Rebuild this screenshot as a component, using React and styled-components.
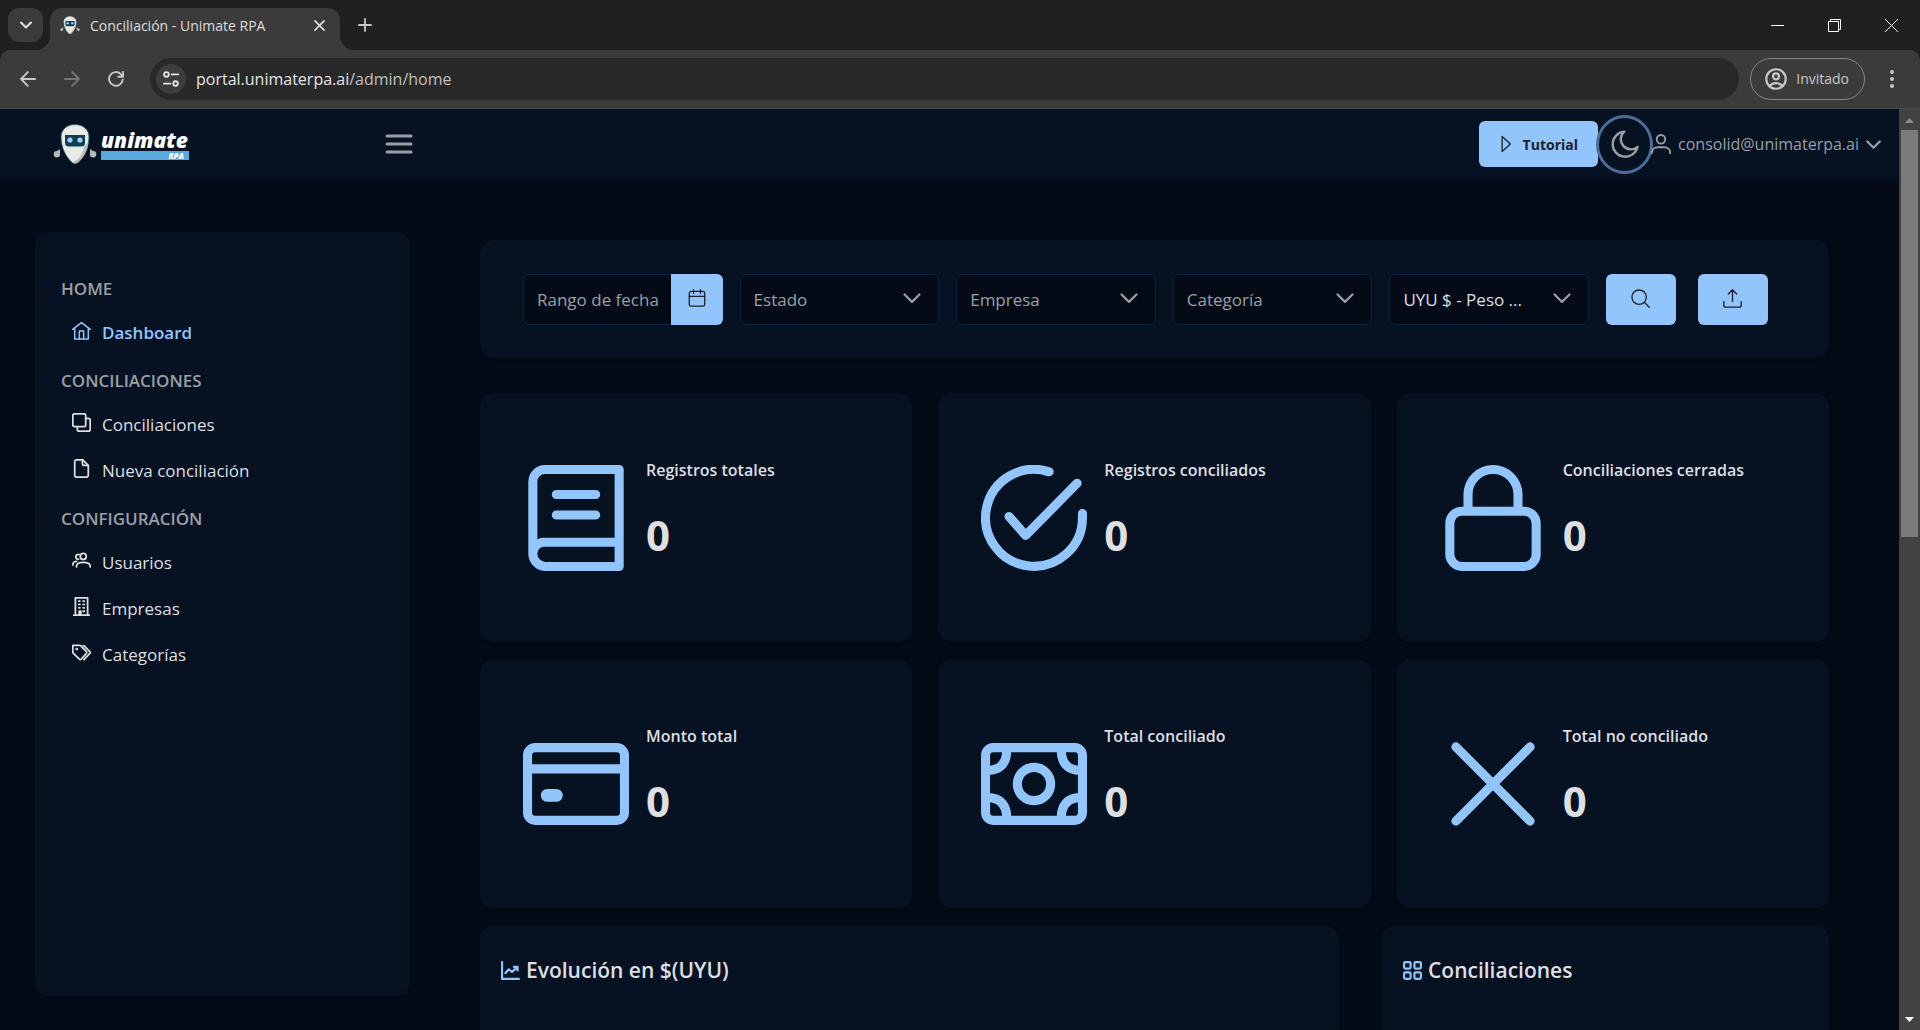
import React from "react";
import styled, { createGlobalStyle } from "styled-components";

const GlobalStyle = createGlobalStyle`
  * {
    box-sizing: border-box;
  }
  html, body, #root {
    height: 100%;
  }
  body {
    margin: 0;
    overflow: hidden;
    background: #040b16;
    color: #dedfe1;
    font-family: "Open Sans", "Noto Sans", sans-serif;
    font-size: 16px;
  }
  button, input, select {
    font: inherit;
    color: inherit;
  }
  button {
    padding: 0;
    border: none;
    background: none;
    cursor: pointer;
  }
`;

// Stroke icons on a 14 x 14 grid
const icons = {
  home: (
    <>
      <path d="M.5 6.200 7 1.200l6.500 5M2 5.300v8h10v-8" />
      <path d="M5.400 13.200V7.400h3.200v5.800" />
    </>
  ),
  clone: (
    <>
      <rect x=".6" y=".6" width="9.500" height="9.500" rx="1.200" />
      <path d="M10.300 3.900h1.900a1.200 1.200 0 0 1 1.200 1.200v7.100a1.200 1.200 0 0 1-1.200 1.200H5.100a1.200 1.200 0 0 1-1.200-1.200v-1.900" />
    </>
  ),
  file: (
    <>
      <path d="M3.200.6h4.700l4.100 4.100v7.300a1.400 1.400 0 0 1-1.400 1.400H3.400A1.400 1.400 0 0 1 2 12V2A1.400 1.400 0 0 1 3.400.6z" />
      <path d="M7.700.8v2.900a1 1 0 0 0 1 1h3" />
    </>
  ),
  users: (
    <>
      <circle cx="8.300" cy="4" r="2.200" />
      <path d="M3.300 11.700v-.500C3.300 9.300 5.300 8.400 8.300 8.400s5.100.9 5.100 2.800v.5" />
      <path d="M5.200 2.600a1.800 1.800 0 1 0-.4 3.500M.6 10.300C.6 8.600 1.500 7.900 3.300 7.700" />
    </>
  ),
  building: (
    <>
      <path d="M2.500 13.300V.6h9v12.700M1.300 13.400h11.400" />
      <path d="M5 3h.8M8.200 3H9M5 5.500h.8M8.200 5.500H9M5 8h.8M8.200 8H9M5.300 13v-2.600h1.200V13M8.200 10.500H9" />
    </>
  ),
  tags: (
    <>
      <path d="M.6 1.800h5.200a1 1 0 0 1 .7.300l4 4a1.100 1.100 0 0 1 0 1.600l-3.600 4.200a1 1 0 0 1-1.500 0L.9 7.500a1 1 0 0 1-.3-.7z" />
      <path d="M8.200 1.900c.5 0 .8.200 1.100.5l3.800 3.900c.4.400.4 1 0 1.400l-4.300 4.500" />
      <circle cx="3.500" cy="4.500" r=".4" />
    </>
  ),
  calendar: (
    <>
      <rect x="1" y="1.900" width="12" height="11.500" rx="1.400" />
      <path d="M1 5.800h12M4.300.5v3M9.700.5v3" />
    </>
  ),
  search: (
    <>
      <circle cx="6" cy="6" r="5.300" />
      <path d="m10 10 3.400 3.400" />
    </>
  ),
  upload: (
    <path d="M7 9.300V.7M3.900 3.700 7 .6l3.100 3.100M.6 9.300v2.700A1.400 1.400 0 0 0 2 13.400h10a1.400 1.400 0 0 0 1.400-1.400V9.300" />
  ),
  play: <path d="M4 1.200v11.600l6.400-5.800z" />,
  moon: (
    <path d="M6.600.8a6.300 6.300 0 1 0 6.700 7.600A5 5 0 0 1 6.600.8z" />
  ),
  user: (
    <>
      <circle cx="7" cy="3.700" r="3" />
      <path d="M.6 13.400v-.500c0-2.300 1.900-3.600 4.200-3.600h4.400c2.300 0 4.200 1.300 4.200 3.600v.5" />
    </>
  ),
  down: <path d="M1.200 4.200 7 10l5.800-5.800" />,
  book: (
    <>
      <path d="M12.700 10.200H2.600A1.600 1.600 0 0 0 1.300 11.700M12.700.6H2.900A1.600 1.600 0 0 0 1.300 2.200v9.500a1.700 1.700 0 0 0 1.600 1.700h9.800z" />
      <path d="M4.400 3.900h5.200M4.400 6.600h5.200" />
    </>
  ),
  check: (
    <>
      <path d="M9 .9A6.400 6.400 0 1 0 13.400 7v-.6" />
      <path d="M3.700 6.800 5.900 9.300l6.800-6.900" />
    </>
  ),
  lock: (
    <>
      <rect x="1.300" y="6.100" width="11.400" height="7.300" rx="1.600" />
      <path d="M3.700 6V3.900a3.300 3.300 0 0 1 6.600 0V6" />
    </>
  ),
  card: (
    <>
      <rect x=".6" y="2.200" width="12.800" height="9.600" rx="1" />
      <path d="M.6 5h12.800" />
      <path strokeWidth="1.700" d="M3.200 8.500h1.200" />
    </>
  ),
  money: (
    <>
      <rect x=".6" y="2.200" width="12.800" height="9.600" rx="1" />
      <circle cx="7" cy="7" r="2.200" />
      <path strokeLinecap="butt" d="M3.400 2.500c0 1.700-.8 2.700-2.500 2.700M10.600 2.500c0 1.700.8 2.700 2.500 2.700M3.400 11.500c0-1.700-.8-2.700-2.500-2.700M10.600 11.500c0-1.700.8-2.700 2.500-2.700" />
    </>
  ),
  times: <path d="m2.100 2.100 9.800 9.800M11.900 2.100l-9.800 9.800" />,
  chart: (
    <>
      <path d="M.8.800v12.400h12.400" />
      <path d="m3.300 8.900 2.500-2.800 2.300 2L12 4.500M9.500 4.300h2.700V7" />
    </>
  ),
  grid: (
    <>
      <rect x=".8" y=".8" width="4.800" height="4.800" rx="1" />
      <rect x="8.400" y=".8" width="4.800" height="4.800" rx="1" />
      <rect x=".8" y="8.400" width="4.800" height="4.800" rx="1" />
      <rect x="8.400" y="8.400" width="4.800" height="4.800" rx="1" />
    </>
  ),
  tune: (
    <>
      <circle cx="3" cy="3" r="2" />
      <circle cx="11" cy="11" r="2" />
      <path d="M7.500 3h5.700M.8 11h5.700" />
    </>
  ),
  guest: (
    <>
      <circle cx="7" cy="7" r="6.200" />
      <circle cx="7" cy="5.300" r="1.900" />
      <path d="M2.800 11.500c1.200-1.300 2.600-1.900 4.200-1.900s3 .6 4.200 1.900" />
    </>
  ),
  back: <path d="M13.200 7H1M6.800 1 1 7l5.800 6" />,
  forward: <path d="M.8 7H13M7.200 1 13 7l-5.800 6" />,
  reload: <path d="M12.900 7.600A6 6 0 1 1 11.200 2.700l1.700 1.900M13.200.8v4.300H8.900" />,
  plus: <path d="M7 1v12M1 7h12" />,
};

const Icon = ({ name, size = 18, weight = 1 }) => (
  <SIcon
    width={size}
    height={size}
    viewBox="0 0 14 14"
    fill="none"
    stroke="currentColor"
    strokeWidth={weight}
    strokeLinecap="round"
    strokeLinejoin="round"
    aria-hidden="true"
  >
    {icons[name]}
  </SIcon>
);

const Robot = ({ size }) => (
  <SIcon width={size} height={size} viewBox="0 0 44 40" aria-hidden="true">
    <path
      d="M22 .5c8.500 0 14 5.500 14 12.500 0 11-5 20-11 25.500q-3 2-6 0C13 33 8 24 8 13 8 6 13.500.5 22 .5z"
      fill="#e9e9e6"
      stroke="#1d5566"
      strokeWidth=".8"
    />
    <path
      d="M35.500 18c-1 9-4.500 15.500-10.500 20.500q-3 2-6 0c7-2.500 11-8 12-16z"
      fill="#b9bbbd"
    />
    <path d="M12 11h20v8q0 3.500-4 3.500H16q-4 0-4-3.500z" fill="#0b4157" />
    <circle cx="17" cy="16" r="2.600" fill="#a9cdf5" />
    <circle cx="27" cy="16" r="2.600" fill="#a9cdf5" />
    <path d="M7 25 4 27a3.200 3.200 0 1 0 3 2.500zM37 25l3 2a3.200 3.200 0 1 1-3 2.500z" fill="#b4b8bc" />
  </SIcon>
);

const menu = [
  {
    title: "HOME",
    items: [{ icon: "home", label: "Dashboard", active: true }],
  },
  {
    title: "CONCILIACIONES",
    items: [
      { icon: "clone", label: "Conciliaciones" },
      { icon: "file", label: "Nueva conciliación" },
    ],
  },
  {
    title: "CONFIGURACIÓN",
    items: [
      { icon: "users", label: "Usuarios" },
      { icon: "building", label: "Empresas" },
      { icon: "tags", label: "Categorías" },
    ],
  },
];

const filters = [
  { name: "Estado" },
  { name: "Empresa" },
  { name: "Categoría" },
  { name: "Moneda", value: "UYU $ - Peso ..." },
];

const stats = [
  { icon: "book", label: "Registros totales", value: 0 },
  { icon: "check", label: "Registros conciliados", value: 0 },
  { icon: "lock", label: "Conciliaciones cerradas", value: 0 },
  { icon: "card", label: "Monto total", value: 0 },
  { icon: "money", label: "Total conciliado", value: 0 },
  { icon: "times", label: "Total no conciliado", value: 0 },
];

const Browser = () => (
  <SBrowser>
    <STabStrip>
      <STabSearch aria-label="Buscar pestañas">
        <Icon name="down" size={12} weight={2.4} />
      </STabSearch>
      <STab>
        <Robot size={20} />
        <STabTitle>Conciliación - Unimate RPA</STabTitle>
        <STabClose aria-label="Cerrar pestaña">
          <Icon name="times" size={13} weight={1.8} />
        </STabClose>
      </STab>
      <SNewTab aria-label="Nueva pestaña">
        <Icon name="plus" size={14} weight={1.8} />
      </SNewTab>
      <SWindowButtons>
        <SWindowButton aria-label="Minimizar">
          <svg width="13" height="13" stroke="#fff" fill="none">
            <path d="M0 6.500h13" />
          </svg>
        </SWindowButton>
        <SWindowButton aria-label="Restaurar">
          <svg width="13" height="13" stroke="#fff" fill="none">
            <path d="M.5 2.500h10v10H.5zM2.500 2.500v-2h10v10h-2" />
          </svg>
        </SWindowButton>
        <SWindowButton aria-label="Cerrar">
          <svg width="13" height="13" stroke="#fff" fill="none">
            <path d="m0 0 13 13M13 0 0 13" />
          </svg>
        </SWindowButton>
      </SWindowButtons>
    </STabStrip>
    <SToolbar>
      <SNavButton aria-label="Atrás">
        <Icon name="back" size={16} weight={1.7} />
      </SNavButton>
      <SNavButton aria-label="Adelante" disabled>
        <Icon name="forward" size={16} weight={1.7} />
      </SNavButton>
      <SNavButton aria-label="Recargar">
        <Icon name="reload" size={16} weight={1.7} />
      </SNavButton>
      <SAddress>
        <SSiteInfo aria-label="Información del sitio">
          <Icon name="tune" size={16} weight={1.6} />
        </SSiteInfo>
        <span>
          portal.unimaterpa.ai<SPath>/admin/home</SPath>
        </span>
      </SAddress>
      <SGuest>
        <Icon name="guest" size={22} weight={1.4} />
        Invitado
      </SGuest>
      <SDots aria-label="Menú">
        <svg width="4" height="18" fill="#c7c7c7">
          <circle cx="2" cy="2" r="2" />
          <circle cx="2" cy="9" r="2" />
          <circle cx="2" cy="16" r="2" />
        </svg>
      </SDots>
    </SToolbar>
  </SBrowser>
);

const Topbar = () => (
  <STopbar>
    <SLogo href="#">
      <Robot size={44} />
      <SLogoText>
        <SLogoName>unimate</SLogoName>
        <SLogoTag>RPA</SLogoTag>
      </SLogoText>
    </SLogo>
    <SMenuButton aria-label="Abrir menú">
      <svg width="28" height="20" stroke="currentColor" strokeWidth="3" strokeLinecap="round">
        <path d="M2 2h24M2 10h24M2 18h24" />
      </svg>
    </SMenuButton>
    <STutorial>
      <Icon name="play" weight={1} />
      Tutorial
    </STutorial>
    <STheme aria-label="Cambiar tema">
      <Icon name="moon" size={28} weight={1.2} />
    </STheme>
    <SAccount>
      <Icon name="user" size={20} weight={1.3} />
      consolid@unimaterpa.ai
      <Icon name="down" size={15} weight={2.2} />
    </SAccount>
  </STopbar>
);

const Sidebar = () => (
  <SSidebar>
    {menu.map((group) => (
      <SGroup key={group.title}>
        <SGroupTitle>{group.title}</SGroupTitle>
        <SList>
          {group.items.map((item) => (
            <li key={item.label}>
              <SLink href="#" $active={item.active}>
                <Icon name={item.icon} size={19} weight={item.active ? 1.1 : 1.3} />
                {item.label}
              </SLink>
            </li>
          ))}
        </SList>
      </SGroup>
    ))}
  </SSidebar>
);

const Filters = () => (
  <SFilters>
    <SDateField>
      <SDateInput aria-label="Rango de fechas" placeholder="Rango de fechas" />
      <SDateButton aria-label="Abrir calendario">
        <Icon name="calendar" size={18} />
      </SDateButton>
    </SDateField>
    {filters.map((filter) => (
      <SSelectWrap key={filter.name}>
        <SSelect aria-label={filter.name} $filled={Boolean(filter.value)}>
          <option>{filter.value || filter.name}</option>
        </SSelect>
        <SArrow>
          <Icon name="down" size={18} weight={1.7} />
        </SArrow>
      </SSelectWrap>
    ))}
    <SActions>
      <SAction aria-label="Buscar">
        <Icon name="search" size={19} />
      </SAction>
      <SAction aria-label="Exportar">
        <Icon name="upload" size={19} />
      </SAction>
    </SActions>
  </SFilters>
);

const App = () => (
  <SWindow>
    <GlobalStyle />
    <Browser />
    <SViewport>
      <SPage>
        <Topbar />
        <SBody>
          <Sidebar />
          <SMain>
            <Filters />
            <SStats>
              {stats.map((stat) => (
                <SStat key={stat.label}>
                  <Icon name={stat.icon} size={106} weight={1.200} />
                  <SStatText>
                    <SStatLabel>{stat.label}</SStatLabel>
                    <SStatValue>{stat.value}</SStatValue>
                  </SStatText>
                </SStat>
              ))}
            </SStats>
            <SPanels>
              <SPanel>
                <SPanelTitle>
                  <Icon name="chart" size={19} weight={1.6} />
                  Evolución en $(UYU)
                </SPanelTitle>
              </SPanel>
              <SPanel>
                <SPanelTitle>
                  <Icon name="grid" size={19} weight={1.6} />
                  Conciliaciones
                </SPanelTitle>
              </SPanel>
            </SPanels>
          </SMain>
        </SBody>
      </SPage>
      <SScrollbar>
        <svg width="9" height="5" fill="#8b8b8b">
          <path d="M0 5 4.500 0 9 5z" />
        </svg>
        <SThumb />
        <svg width="9" height="5" fill="#fff">
          <path d="M0 0h9L4.500 5z" />
        </svg>
      </SScrollbar>
    </SViewport>
  </SWindow>
);

export default App;

const SIcon = styled.svg`
  display: block;
  flex: none;
`;

const SWindow = styled.div`
  display: flex;
  flex-direction: column;
  height: 100vh;
`;

const SBrowser = styled.header`
  background: #1f2020;
`;

const STabStrip = styled.div`
  display: flex;
  height: 50px;
  padding: 8px 0 0 8px;
`;

const STabSearch = styled.button`
  display: grid;
  place-items: center;
  width: 35px;
  height: 34px;
  margin-right: 7px;
  border-radius: 11px;
  background: #3b3b3b;
`;

const STab = styled.div`
  position: relative;
  display: flex;
  align-items: center;
  width: 290px;
  padding: 0 12px 8px 10px;
  border-radius: 12px 12px 0 0;
  background: #3b3b3b;
  color: #dedede;
  font-size: 14px;
  &::before,
  &::after {
    content: "";
    position: absolute;
    bottom: 0;
    width: 14px;
    height: 14px;
  }
  &::before {
    right: 100%;
    background: radial-gradient(circle at 0 0, transparent 14px, #3b3b3b 14px);
  }
  &::after {
    left: 100%;
    background: radial-gradient(circle at 100% 0, transparent 14px, #3b3b3b 14px);
  }
`;

const STabTitle = styled.span`
  flex: 1;
  margin-left: 10px;
  white-space: nowrap;
`;

const STabClose = styled.button`
  display: grid;
  place-items: center;
  width: 17px;
  height: 17px;
`;

const SNewTab = styled(STabClose)`
  width: 34px;
  height: 34px;
  margin-left: 8px;
  color: #c7c7c7;
`;

const SWindowButtons = styled.div`
  display: flex;
  height: 34px;
  margin-left: auto;
`;

const SWindowButton = styled.button`
  display: grid;
  place-items: center;
  width: 57px;
`;

const SToolbar = styled.div`
  display: flex;
  align-items: center;
  height: 59px;
  padding: 0 18px 1px;
  border-bottom: 1px solid #4a4a4a;
  border-radius: 10px 10px 0 0;
  background: #3b3b3b;
`;

const SNavButton = styled.button`
  display: grid;
  place-items: center;
  width: 44px;
  height: 40px;
  padding-right: 25px;
  color: #c7c7c7;
  &:disabled {
    color: #757575;
  }
`;

const SAddress = styled.div`
  display: flex;
  align-items: center;
  flex: 1;
  gap: 10px;
  height: 42px;
  margin-right: 11px;
  padding: 0 6px;
  border-radius: 21px;
  background: #282828;
  color: #e6e6e6;
`;

const SSiteInfo = styled.button`
  display: grid;
  place-items: center;
  width: 30px;
  height: 30px;
  border-radius: 50%;
  background: #3d3d3d;
`;

const SPath = styled.span`
  color: #c0c0c0;
`;

const SGuest = styled.button`
  display: flex;
  align-items: center;
  gap: 9px;
  height: 42px;
  padding: 0 15px 0 14px;
  border: 1px solid #858585;
  border-radius: 21px;
  color: #c7c7c7;
  font-size: 14px;
`;

const SDots = styled.button`
  margin-left: 25px;
  margin-right: 8px;
  line-height: 0;
`;

const SViewport = styled.div`
  display: flex;
  flex: 1;
  min-height: 0;
`;

const SPage = styled.div`
  display: flex;
  flex-direction: column;
  flex: 1;
  min-width: 0;
`;

const STopbar = styled.div`
  display: flex;
  align-items: center;
  flex: none;
  height: 70px;
  padding: 0 18px 0 53px;
  background: #061222;
  color: #9a9fa6;
`;

const SLogo = styled.a`
  display: flex;
  align-items: center;
  gap: 4px;
  width: 332px;
  color: #fff;
  text-decoration: none;
`;

const SLogoText = styled.span`
  display: flex;
  flex-direction: column;
  width: 88px;
`;

const SLogoName = styled.span`
  font: italic 800 21px/22px "Open Sans", sans-serif;
`;

const SLogoTag = styled.span`
  padding-right: 5px;
  background: #58a9dd;
  font: italic 800 8px/9px "Open Sans", sans-serif;
  text-align: right;
`;

const SMenuButton = styled.button`
  margin-right: auto;
  line-height: 0;
`;

const STutorial = styled.button`
  display: flex;
  align-items: center;
  gap: 8px;
  height: 46px;
  padding: 0 20px 0 18px;
  border-radius: 6px;
  background: #93c5fd;
  color: #1c2127;
  font-size: 14px;
  font-weight: 700;
`;

const STheme = styled.button`
  display: grid;
  place-items: center;
  width: 57px;
  height: 59px;
  margin: 0 -2px;
  border: 3px solid #4b6d98;
  border-radius: 50%;
`;

const SAccount = styled.button`
  display: flex;
  align-items: center;
  gap: 7px;
`;

const SBody = styled.div`
  display: flex;
  flex: 1;
  min-height: 0;
  gap: 70px;
  padding: 0 70px 0 35px;
`;

const SSidebar = styled.nav`
  flex: none;
  width: 375px;
  margin: 53px 0 34px;
  padding: 41px 26px;
  border-radius: 14px;
  background: #061222;
  font-size: 17px;
`;

const SGroup = styled.div`
  margin-bottom: 10px;
`;

const SGroupTitle = styled.h2`
  margin: 0 0 4px;
  color: #9a9fa6;
  font-size: 17px;
  font-weight: 600;
  line-height: 32px;
`;

const SList = styled.ul`
  margin: 0;
  padding: 0;
  list-style: none;
`;

const SLink = styled.a`
  display: flex;
  align-items: center;
  gap: 11px;
  height: 46px;
  padding: 0 11px;
  color: ${({ $active }) => ($active ? "#93c5fd" : "#dedfe1")};
  font-weight: ${({ $active }) => ($active ? 600 : 400)};
  text-decoration: none;
  ${SIcon} {
    margin-bottom: 4px;
  }
`;

const SMain = styled.main`
  display: flex;
  flex-direction: column;
  flex: 1;
  min-width: 0;
  padding-top: 61px;
`;

const SCard = styled.section`
  border-radius: 14px;
  background: #061222;
  box-shadow: 0 2px 4px rgba(0, 0, 0, 0.2);
`;

const SFilters = styled(SCard)`
  display: flex;
  gap: 17px;
  padding: 34px 61px 33px 43px;
  font-size: 17px;
`;

const SDateField = styled.div`
  display: flex;
  flex: 1;
  min-width: 0;
  height: 51px;
`;

const SDateInput = styled.input`
  flex: 1;
  min-width: 0;
  padding: 0 13px;
  border: 1px solid #0b213f;
  border-right: none;
  border-radius: 6px 0 0 6px;
  background: #040b16;
  &::placeholder {
    color: #9a9fa6;
    opacity: 1;
  }
`;

const SDateButton = styled.button`
  display: grid;
  place-items: center;
  width: 52px;
  padding-bottom: 3px;
  border-radius: 0 6px 6px 0;
  background: #93c5fd;
  color: #1c2127;
`;

const SSelectWrap = styled.div`
  position: relative;
  flex: 1;
  min-width: 0;
`;

const SSelect = styled.select`
  appearance: none;
  width: 100%;
  height: 51px;
  padding: 0 50px 0 13px;
  border: 1px solid #0b213f;
  border-radius: 6px;
  background: #040b16;
  color: ${({ $filled }) => ($filled ? "#dedfe1" : "#9a9fa6")};
`;

const SArrow = styled.span`
  position: absolute;
  top: 15px;
  right: 18px;
  color: #9a9fa6;
  pointer-events: none;
`;

const SActions = styled.div`
  display: flex;
  gap: 22px;
`;

const SAction = styled.button`
  display: grid;
  place-items: center;
  width: 70px;
  height: 51px;
  padding-bottom: 3px;
  border-radius: 6px;
  background: #93c5fd;
  color: #1c2127;
`;

const SStats = styled.div`
  display: grid;
  grid-template-columns: repeat(3, 1fr);
  gap: 17px 26px;
  margin: 35px 0 17px;
`;

const SStat = styled(SCard)`
  display: flex;
  align-items: center;
  gap: 17px;
  height: 249px;
  padding: 0 43px;
  ${SIcon} {
    color: #93c5fd;
  }
`;

const SStatText = styled.div`
  padding-bottom: 16px;
`;

const SStatLabel = styled.h3`
  margin: 0 0 29px;
  font-size: 16px;
  font-weight: 600;
  line-height: 22px;
`;

const SStatValue = styled.p`
  margin: 0;
  font-size: 42px;
  font-weight: 700;
  line-height: 50px;
`;

const SPanels = styled.div`
  display: grid;
  grid-template-columns: 859fr 447fr;
  flex: 1;
  gap: 43px;
  min-height: 105px;
`;

const SPanel = styled(SCard)`
  padding: 28px 21px;
  border-radius: 14px 14px 0 0;
`;

const SPanelTitle = styled.h2`
  display: flex;
  align-items: center;
  gap: 6px;
  margin: 0;
  font-size: 21px;
  font-weight: 600;
  line-height: 34px;
  ${SIcon} {
    color: #93c5fd;
  }
`;

const SScrollbar = styled.div`
  display: flex;
  flex-direction: column;
  align-items: center;
  width: 21px;
  padding: 9px 2px 8px;
  background: #424242;
`;

const SThumb = styled.div`
  width: 17px;
  height: 45%;
  margin: 7px 0 auto;
  background: #7b7b7b;
`;
